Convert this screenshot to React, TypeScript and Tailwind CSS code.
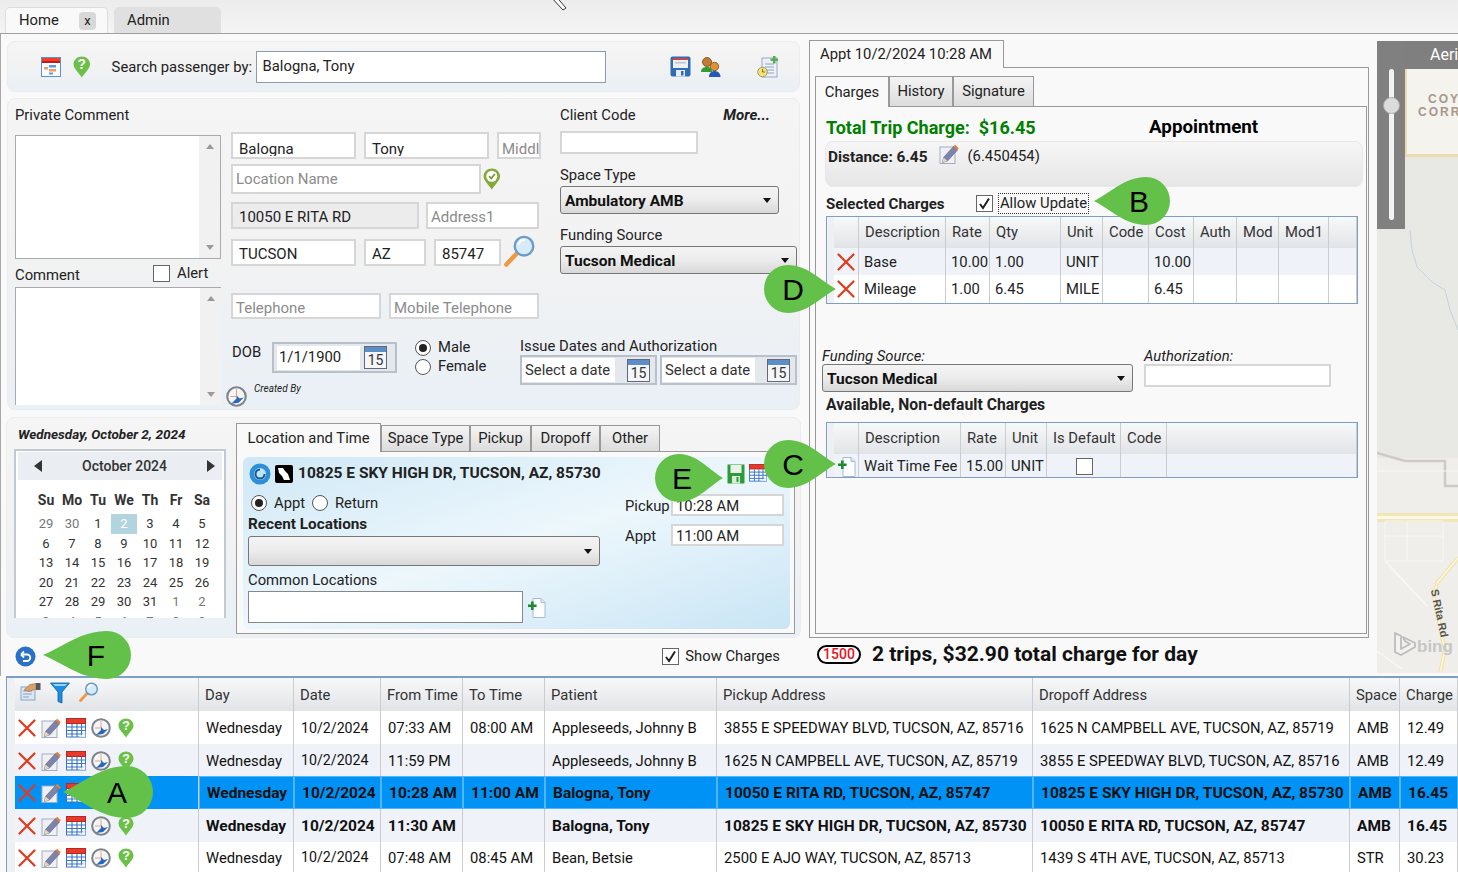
import type { ReactNode } from "react"

const ui = "font-['Roboto',sans-serif]"

function XIcon() {
  return (
    <svg width="18" height="18" viewBox="0 0 18 18" className="shrink-0">
      <path d="M1.500 1.500 16.500 16.500M16.500 1.500 1.500 16.500" stroke="#e23a1e" strokeWidth="2.200" strokeLinecap="round" />
    </svg>
  )
}

function PencilIcon({ size = 20 }: { size?: number }) {
  return (
    <svg width={size} height={size} viewBox="0 0 20 20" className="shrink-0">
      <rect x="1" y="3" width="15" height="16.500" fill="#eef0f6" stroke="#a3abbf" />
      <path d="M4.500 13.500 14.500 2.500 18.500 6 8.500 17 3.500 18.500Z" fill="#7e84a8" stroke="#565d84" strokeWidth=".6" />
      <path d="M14.500 2.500 16.200 .8 19.800 4.200 18.500 6Z" fill="#f07d2b" />
      <path d="M4.500 13.500 3.500 18.500 8.500 17Z" fill="#e9d7b4" />
    </svg>
  )
}

function TableIcon({ size = 20 }: { size?: number }) {
  return (
    <svg width={size} height={size} viewBox="0 0 20 20" className="shrink-0">
      <rect x=".5" y="5" width="19" height="14" fill="#fff" stroke="#3a76c4" />
      <rect x=".5" y=".5" width="19" height="5" fill="#e8392c" stroke="#b52a20" />
      <path d="M1 9h18M1 12.500h18M1 16h18M6 6v13M11 6v13M15.500 6v13" stroke="#3a76c4" strokeWidth="1.100" />
      <path d="M13 19 19.500 13V19Z" fill="#fff" opacity=".7" />
    </svg>
  )
}

function PlanIcon() {
  return (
    <svg width="20" height="20" viewBox="0 0 20 20" className="shrink-0">
      <rect x=".5" y=".5" width="19" height="19" fill="#f8fbff" stroke="#5c8fd6" />
      <rect x="1" y="1" width="18" height="3" fill="#f0402c" />
      <rect x="1" y="4" width="18" height="2" fill="#b5201c" />
      <rect x="8" y="8" width="7" height="2.500" fill="#5d9be0" />
      <rect x="3" y="10" width="4" height="2.500" fill="#f39a62" />
      <rect x="8" y="12" width="7" height="2.500" fill="#f39a62" />
      <rect x="8" y="15.500" width="4" height="2" fill="#5d9be0" />
    </svg>
  )
}

function ClockIcon({ size = 20 }: { size?: number }) {
  return (
    <svg width={size} height={size} viewBox="0 0 20 20" className="shrink-0">
      <circle cx="10" cy="10" r="8.800" fill="#f4f5f7" stroke="#7f8288" strokeWidth="2" />
      <path d="M10 3v7M4 10h6" stroke="#e7a28f" strokeWidth="1" />
      <path d="M5 17 10 12 10 9 13 12 17 11 12 16Z" fill="#2a66c0" />
    </svg>
  )
}

function Pin({ check = false, size = 20 }: { check?: boolean; size?: number }) {
  return (
    <svg width={size * 0.8} height={size} viewBox="0 0 16 20" className="shrink-0">
      <path d="M8 .5C3.800 .5 .5 3.600 .5 7.600c0 3.600 3.600 6.600 7.500 11.900C11.900 14.200 15.500 11.200 15.500 7.600 15.500 3.600 12.200 .5 8 .5Z" fill={check ? "#85a83a" : "#6cc04a"} />
      {check ? (
        <>
          <circle cx="8" cy="7.500" r="5" fill="#fff" />
          <path d="M5.500 7.500 7.500 9.500 10.800 5.500" fill="none" stroke="#6d9a2c" strokeWidth="1.600" />
        </>
      ) : (
        <text x="8" y="11.800" textAnchor="middle" fontSize="12.500" fontWeight="700" fill="#fff" fontFamily="Liberation Sans, sans-serif">?</text>
      )}
    </svg>
  )
}

function MagIcon({ size = 20 }: { size?: number }) {
  return (
    <svg width={size} height={size} viewBox="0 0 20 20" className="shrink-0">
      <path d="M1.500 18.500 8 11.500" stroke="#ec9a45" strokeWidth="2.800" strokeLinecap="round" />
      <circle cx="12.500" cy="7" r="5.800" fill="#d7ecfb" stroke="#6c9cc6" strokeWidth="1.500" />
      <path d="M9 6c.5-2 2-3 4-3" stroke="#fff" strokeWidth="1.300" fill="none" />
    </svg>
  )
}

function FunnelIcon() {
  return (
    <svg width="20" height="22" viewBox="0 0 20 22">
      <path d="M.5 1h19L12 10v11l-4-1.500V10Z" fill="#1a8fe0" stroke="#0c5da5" strokeWidth=".8" />
      <path d="M3 2h14l-2 2H5Z" fill="#9bd3f7" />
    </svg>
  )
}

function HandIcon() {
  return (
    <svg width="21" height="19" viewBox="0 0 21 19">
      <rect x="1" y="5" width="14" height="13" fill="#dce7f5" stroke="#8aa4c8" />
      <path d="M3 9h9M3 12h9M3 15h6" stroke="#8aa4c8" />
      <path d="M4 8 10 2.500 16 1.500V7L9 9.500Z" fill="#d9a06a" stroke="#9a6b3e" strokeWidth=".6" />
      <rect x="16" y="1" width="4.500" height="7" fill="#55585e" />
    </svg>
  )
}

function FloppyIcon() {
  return (
    <svg width="21" height="21" viewBox="0 0 21 21" className="shrink-0">
      <rect x=".5" y=".5" width="20" height="20" rx="2" fill="#2f6db5" />
      <rect x="3" y="2" width="15" height="10" fill="#f0f0f2" />
      <rect x="3" y="2" width="15" height="2" fill="#c9474a" />
      <rect x="5" y="6" width="11" height="1.500" fill="#b9c6d8" />
      <rect x="6" y="14" width="9" height="6.500" fill="#e9edf3" />
      <rect x="11" y="15" width="2.500" height="4.500" fill="#2f6db5" />
    </svg>
  )
}

function PeopleIcon() {
  return (
    <svg width="22" height="22" viewBox="0 0 22 22" className="shrink-0">
      <circle cx="7" cy="6" r="4.500" fill="#c47a33" stroke="#6f4a1d" strokeWidth=".8" />
      <path d="M1 16c0-4 3-5 6-5s5 1 5 5Z" fill="#2f9d33" />
      <circle cx="14.500" cy="10.500" r="4.200" fill="#e09138" stroke="#7a4d1c" strokeWidth=".8" />
      <path d="M9 21c0-4 2.500-6 5.500-6s6 2 6 6Z" fill="#2559b8" />
    </svg>
  )
}

function DocClockIcon() {
  return (
    <svg width="21" height="22" viewBox="0 0 21 22" className="shrink-0">
      <rect x="5" y="2" width="15" height="19" fill="#eef2f8" stroke="#96a8c4" />
      <path d="M8 8h9M8 11h9M10 14h7M10 17h7" stroke="#8ea3c2" />
      <path d="M16 0h2.500v2.500H21V5h-2.500v2.500H16V5h-2.500V2.500H16Z" fill="#57ad57" />
      <circle cx="5.500" cy="16" r="4.800" fill="#f3e27a" stroke="#9a9a6a" />
      <path d="M5.500 13v3h2.500" stroke="#8a6d1a" fill="none" />
    </svg>
  )
}

function SaveGreenIcon() {
  return (
    <svg width="18" height="20" viewBox="0 0 18 20" className="shrink-0">
      <rect x=".5" y=".5" width="17" height="19" fill="#2f9a3c" />
      <rect x="3.500" y="1" width="11" height="8" fill="#e8f4e8" />
      <rect x="5" y="12" width="8" height="7.500" fill="#d8ecd8" />
      <rect x="9.500" y="13" width="2" height="5" fill="#2f9a3c" />
    </svg>
  )
}

function AddDocIcon() {
  return (
    <svg width="19" height="21" viewBox="0 0 19 21" className="shrink-0">
      <path d="M6 1.500h8l4 4v15H6Z" fill="#fdfeff" stroke="#a9bad4" />
      <path d="M14 1.500v4h4" fill="#dbe5f3" stroke="#a9bad4" />
      <path d="M4 4.500h2.600v3h3v2.600h-3v3H4v-3H1V7.500h3Z" fill="#1f8a2f" />
    </svg>
  )
}

function Radio({ on = false }: { on?: boolean }) {
  return (
    <span className="flex h-[16px] w-[16px] shrink-0 items-center justify-center rounded-full border border-[#555] bg-white">
      {on && <span className="h-[8px] w-[8px] rounded-full bg-[#222]" />}
    </span>
  )
}

function Check({ on = false }: { on?: boolean }) {
  return (
    <span className="flex h-[17px] w-[17px] shrink-0 items-center justify-center border border-[#666] bg-white">
      {on && (
        <svg width="13" height="13" viewBox="0 0 13 13">
          <path d="M2 7 5 11 11 1.500" fill="none" stroke="#222" strokeWidth="2" />
        </svg>
      )}
    </span>
  )
}

function Field({ className, text, hint, gray, clip }: { className: string; text?: string; hint?: boolean; gray?: boolean; clip?: boolean }) {
  return (
    <div
      className={`flex shrink-0 overflow-hidden border-2 border-[#d6d6d6] text-[15px] leading-[22px] ${gray ? "bg-[#ececec]" : "bg-white"} ${hint ? "pl-[3px] text-[#8b8b8b]" : "pl-[6px] text-[#222]"} ${className}`}
    >
      <span className={`whitespace-nowrap ${clip ? "h-[18px] overflow-hidden" : ""}`}>{text}</span>
    </div>
  )
}

function Dropdown({ className, text }: { className: string; text?: string }) {
  return (
    <div className={`flex shrink-0 items-center justify-between rounded-[3px] border border-[#777] bg-gradient-to-b from-[#f4f4f4] via-[#ececec] to-[#d8d8d8] pl-[4px] pr-[7px] text-[15.500px] font-bold text-[#111] ${className}`}>
      <span className="pt-[3px]">{text}</span>
      <span className="h-0 w-0 border-x-[4px] border-t-[5px] border-x-transparent border-t-[#111]" />
    </div>
  )
}

function Cal15() {
  return (
    <span className="flex h-[23px] w-[23px] shrink-0 flex-col border border-[#667] bg-[#f4f6f9]">
      <span className="h-[6px] bg-[#5a8fc8]" />
      <span className="flex-1 text-center text-[14px] leading-[16px] text-[#333]">15</span>
    </span>
  )
}

function DateBox({ text, className }: { text: string; className: string }) {
  return (
    <div className={`flex items-center justify-between border-2 border-[#b8c0cc] bg-[#e4e7ec] pr-[5px] ${className}`}>
      <span className="flex h-[24px] w-[93px] items-center whitespace-nowrap bg-white pl-[3px] text-[#333]">{text}</span>
      <Cal15 />
    </div>
  )
}

function Scrollbar() {
  return (
    <div className="flex h-full w-[21px] flex-col items-center justify-between bg-[#f1f1f1] py-[8px]">
      <span className="h-0 w-0 border-x-[4px] border-b-[5px] border-x-transparent border-b-[#9a9a9a]" />
      <span className="h-0 w-0 border-x-[4px] border-t-[5px] border-x-transparent border-t-[#9a9a9a]" />
    </div>
  )
}

function Callout({ w, h, flip, letter, className, letterClass }: { w: number; h: number; flip?: boolean; letter: string; className: string; letterClass: string }) {
  const r = h / 2
  const c = w - r
  const d = `M0 ${r}C${c * 0.35} ${r * 0.6} ${c * 0.6} 0 ${c} 0A${r} ${r} 0 0 1 ${c} ${h}C${c * 0.6} ${h} ${c * 0.35} ${r * 1.4} 0 ${r}Z`
  return (
    <div className={`absolute z-20 ${className}`}>
      <svg width={w} height={h} viewBox={`0 0 ${w} ${h}`} className={flip ? "-scale-x-100" : ""}>
        <path d={d} fill="#63c14a" />
      </svg>
      <span className={`absolute inset-0 flex items-center justify-center font-['Liberation_Sans',sans-serif] text-[30px] text-black ${letterClass}`}>{letter}</span>
    </div>
  )
}

function Panel({ className, children }: { className: string; children: ReactNode }) {
  return (
    <div className={`rounded-[8px] border border-[#ececec] bg-gradient-to-b from-[#f5f5f5] via-[#f2f2f2] to-[#e9f0f6] ${className}`}>{children}</div>
  )
}

function Tab({ text, on, className }: { text: string; on?: boolean; className: string }) {
  return (
    <div
      className={`flex items-center justify-center whitespace-nowrap border border-b-0 border-[#999] text-[#222] ${on ? "relative z-10 -mb-px bg-[#f9f9f9]" : "bg-gradient-to-b from-[#f4f4f4] to-[#dcdcdc]"} ${className}`}
    >
      {text}
    </div>
  )
}

const calendarRows = [
  ["29", "30", "1", "2", "3", "4", "5"],
  ["6", "7", "8", "9", "10", "11", "12"],
  ["13", "14", "15", "16", "17", "18", "19"],
  ["20", "21", "22", "23", "24", "25", "26"],
  ["27", "28", "29", "30", "31", "1", "2"],
  ["3", "4", "5", "6", "7", "8", "9"],
]

function Calendar() {
  return (
    <div className="h-[169px] w-[212px] overflow-hidden border-x-2 border-t-2 border-[#c4c9d0] bg-white">
      <div className="mx-[2px] mt-[1px] flex h-[28px] items-center justify-between bg-[#eaedf1] pl-[16px] pr-[7px] text-[14px] font-medium text-[#333]">
        <span className="h-0 w-0 border-y-[6px] border-r-[8px] border-y-transparent border-r-[#333]" />
        <span>October 2024</span>
        <span className="h-0 w-0 border-y-[6px] border-l-[8px] border-y-transparent border-l-[#333]" />
      </div>
      <div className="ml-[17px] mt-[10px] grid w-[182px] grid-cols-7 text-center">
        {["Su", "Mo", "Tu", "We", "Th", "Fr", "Sa"].map((d) => (
          <span key={d} className="h-[24px] text-[14px] font-bold leading-[20px] text-[#333]">{d}</span>
        ))}
        {calendarRows.flat().map((d, i) => {
          const faded = i < 2 || i > 32
          return (
            <span key={i} className={`h-[19.6px] text-[13px] leading-[19px] ${i === 3 ? "bg-[#b2d4df] text-white" : faded ? "text-[#777]" : "text-[#333]"}`}>
              {d}
            </span>
          )
        })}
      </div>
    </div>
  )
}

function ChargeHeader({ cols, labels }: { cols: string; labels: string[] }) {
  return (
    <div className={`grid h-[31px] bg-gradient-to-b from-[#f7f8f9] to-[#e1e4e7] ${cols}`}>
      <span className="border-r border-[#ccc]" />
      {labels.map((l) => (
        <span key={l} className="flex items-center whitespace-nowrap border-r border-[#ccc] pl-[6px] text-[#333]">{l}</span>
      ))}
    </div>
  )
}

function ChargeRow({ cols, cells, alt, icon, h }: { cols: string; cells: ReactNode[]; alt?: boolean; icon: ReactNode; h: string }) {
  return (
    <div className={`grid ${h} ${alt ? "bg-[#eff3f9]" : "bg-white"} ${cols}`}>
      <span className="flex items-center border-r border-[#ccc] pl-[3px]">{icon}</span>
      {cells.map((c, i) => (
        <span key={i} className="flex items-center whitespace-nowrap border-r border-[#ccc] pl-[5px] pt-[1px] text-[#222]">{c}</span>
      ))}
    </div>
  )
}

const tripRows = [
  { day: "Wednesday", date: "10/2/2024", from: "07:33 AM", to: "08:00 AM", patient: "Appleseeds, Johnny B", pickup: "3855 E SPEEDWAY BLVD, TUCSON, AZ, 85716", dropoff: "1625 N CAMPBELL AVE, TUCSON, AZ, 85719", space: "AMB", charge: "12.49", bg: "bg-white", h: "h-[33px]" },
  { day: "Wednesday", date: "10/2/2024", from: "11:59 PM", to: "", patient: "Appleseeds, Johnny B", pickup: "1625 N CAMPBELL AVE, TUCSON, AZ, 85719", dropoff: "3855 E SPEEDWAY BLVD, TUCSON, AZ, 85716", space: "AMB", charge: "12.49", bg: "bg-[#eff3f9]", h: "h-[32px]" },
  { day: "Wednesday", date: "10/2/2024", from: "10:28 AM", to: "11:00 AM", patient: "Balogna, Tony", pickup: "10050 E RITA RD, TUCSON, AZ, 85747", dropoff: "10825 E SKY HIGH DR, TUCSON, AZ, 85730", space: "AMB", charge: "16.45", bg: "bg-[#0093f5]", h: "h-[33px]", bold: true, selected: true },
  { day: "Wednesday", date: "10/2/2024", from: "11:30 AM", to: "", patient: "Balogna, Tony", pickup: "10825 E SKY HIGH DR, TUCSON, AZ, 85730", dropoff: "10050 E RITA RD, TUCSON, AZ, 85747", space: "AMB", charge: "16.45", bg: "bg-[#eff3f9]", h: "h-[33px]", bold: true },
  { day: "Wednesday", date: "10/2/2024", from: "07:48 AM", to: "08:45 AM", patient: "Bean, Betsie", pickup: "2500 E AJO WAY, TUCSON, AZ, 85713", dropoff: "1439 S 4TH AVE, TUCSON, AZ, 85713", space: "STR", charge: "30.23", bg: "bg-white", h: "h-[30px]" },
]

const tripCols = "grid-cols-[184px_95px_87px_82px_82px_172px_316px_317px_50px_58px]"

function TripGrid() {
  return (
    <div className="ml-[6px] h-[196px] overflow-hidden border-t-2 border-l border-[#7d9fc6]">
      <div className="flex">
        <div className="w-[8px] shrink-0 bg-[#eef0f2]" />
        <div className="flex-1">
          <div className={`grid h-[33px] bg-gradient-to-b from-[#f7f8f9] to-[#e1e4e7] ${tripCols}`}>
            <div className="flex items-start gap-[9px] border-r border-[#ccc] pl-[5px] pt-[4px]">
              <HandIcon />
              <FunnelIcon />
              <MagIcon />
            </div>
            {["Day", "Date", "From Time", "To Time", "Patient", "Pickup Address", "Dropoff Address", "Space", "Charge"].map((h) => (
              <span key={h} className="flex items-center whitespace-nowrap border-r border-[#ccc] pl-[6px] pt-[1px] text-[#333]">{h}</span>
            ))}
          </div>
          {tripRows.map((r, i) => (
            <div key={i} className={`grid ${r.h} ${r.bg} ${tripCols}`}>
              <div className="flex items-center gap-[5px] border-r border-[#ccc] pl-[3px] pt-[1px]">
                <XIcon />
                <PencilIcon />
                <TableIcon />
                <ClockIcon />
                <span className="ml-[2px]"><Pin /></span>
              </div>
              {[r.day, r.date, r.from, r.to, r.patient, r.pickup, r.dropoff, r.space, r.charge].map((c, j) => (
                <span
                  key={j}
                  className={`flex items-center whitespace-nowrap pl-[7px] pt-[2px] text-[#111] ${r.selected ? "border border-[#55b4f8]" : "border-r border-[#ccc]"} ${r.bold ? "text-[15.500px] font-bold" : j === 1 ? "text-[14.200px]" : ""}`}
                >
                  {c}
                </span>
              ))}
            </div>
          ))}
        </div>
      </div>
    </div>
  )
}

function MapPane() {
  return (
    <div className="relative mt-[7px] h-[632px] w-[81px] overflow-hidden bg-[#e8e8e5]">
      <svg width="81" height="632" viewBox="0 0 81 632" className="absolute left-0 top-0">
        <rect x="0" y="417" width="81" height="215" fill="#efeeeb" />
        <path d="M33 189 35 209 40 226 55 241 68 249 73 269 81 289" fill="none" stroke="#c7d2dd" strokeWidth="1" />
        <path d="M0 412 28 420H68V445H81" fill="none" stroke="#cecbc7" strokeWidth="2.500" />
        <path d="M0 430H81" stroke="#f7f7f5" strokeWidth="1" />
        <rect x="0" y="472" width="81" height="9" fill="#f1e6b6" />
        <rect x="0" y="475" width="81" height="3" fill="#fbf8ea" />
        <path d="M8 480H66V520H8ZM8 495H66M30 480V520" fill="none" stroke="#f7f7f4" strokeWidth="1" />
        <path d="M81 517 60 542 57 556 68 609 63 632" fill="none" stroke="#f1e4ac" strokeWidth="4" />
        <path d="M81 517 60 542 57 556 68 609 63 632" fill="none" stroke="#faf6e2" strokeWidth="1.500" />
        <path d="M8 520 50 565M0 610 25 628" stroke="#f8f8f6" strokeWidth="1.500" />
        <path d="M18 592 24 595V608L33 603 28 600 26 596 38 602V606L24 614 18 611Z" fill="#f2f2f0" stroke="#bcbcbc" strokeWidth="1.800" strokeLinejoin="round" />
      </svg>
      <div className="absolute left-[28px] top-[28px] h-[88px] w-[53px] overflow-hidden border-b-[3px] border-l-[2px] border-[#eadcae] bg-[#f4f3ee]">
        <div className="ml-[21px] mt-[24px] whitespace-nowrap font-['Liberation_Sans',sans-serif] text-[12px] font-bold leading-[13px] tracking-[2px] text-[#a8988c]">COYOTE</div>
        <div className="ml-[11px] whitespace-nowrap font-['Liberation_Sans',sans-serif] text-[12px] font-bold leading-[13px] tracking-[2px] text-[#a8988c]">CORRIDOR</div>
      </div>
      <div className="absolute left-0 top-0 h-[28px] w-[81px] overflow-hidden bg-[#7f7f7f] pl-[53px] text-[16px] leading-[28px] text-white">
        <span className="whitespace-nowrap">Aerial</span>
      </div>
      <div className="absolute left-0 top-0 flex h-[188px] w-[28px] justify-center bg-[#808080]">
        <div className="relative mt-[28px] h-[151px] w-[5px] rounded-full bg-[#f3f3f3]">
          <div className="absolute -left-[6px] top-[28px] h-[17px] w-[17px] rounded-full border border-[#aaa] bg-[#dcdcdc]" />
        </div>
      </div>
      <span className="absolute left-[38px] top-[564px] rotate-[78deg] whitespace-nowrap font-['Liberation_Sans',sans-serif] text-[11px] font-bold text-[#555]">S Rita Rd</span>
      <span className="absolute left-[40px] top-[593px] font-['Liberation_Sans',sans-serif] text-[17px] font-bold text-[#c6c6c6]">bing</span>
    </div>
  )
}

export default function App() {
  const chargeCols = "grid-cols-[25px_87px_44px_71px_42px_46px_45px_43px_42px_50px_1fr]"
  const availCols = "grid-cols-[25px_102px_45px_41px_74px_46px_1fr]"
  return (
    <div className={`relative h-[872px] w-[1458px] overflow-hidden bg-[#f9f9f9] text-[14.800px] text-[#222] ${ui}`}>
      {/* top tabs */}
      <div className="h-[34px] border-b border-[#a0a0a0] bg-gradient-to-b from-[#ececec] to-[#f4f4f4] pt-[7px]">
        <div className="flex gap-[6px] pl-[5px]">
          <div className="flex h-[26px] w-[103px] items-center rounded-t-[5px] border border-b-0 border-[#ddd] bg-[#f9f9f9] pl-[13px]">
            <span className="w-[60px]">Home</span>
            <span className="flex h-[18px] w-[17px] items-center justify-center rounded-[4px] bg-[#d8d8d8] text-[13px]">x</span>
          </div>
          <div className="flex h-[26px] w-[107px] items-center rounded-t-[5px] bg-[#e0e0e0] pl-[13px]">Admin</div>
        </div>
      </div>

      <div className="flex h-[642px]">
        {/* left column */}
        <div className="w-[808px] shrink-0 border-l border-[#a8a8a8]">
          <Panel className="ml-[6px] mt-[7px] flex h-[51px] w-[793px] items-center">
            <span className="ml-[33px]"><PlanIcon /></span>
            <span className="ml-[12px]"><Pin size={22} /></span>
            <span className="ml-[21px] mt-[1px] w-[140px] whitespace-nowrap">Search passenger by:</span>
            <div className="ml-[4px] flex h-[32px] w-[350px] items-start border border-[#8a9ab0] bg-white pl-[6px] pt-[3px]">Balogna, Tony</div>
            <span className="ml-[64px]"><FloppyIcon /></span>
            <span className="ml-[9px]"><PeopleIcon /></span>
            <span className="ml-[35px]"><DocClockIcon /></span>
          </Panel>

          <Panel className="ml-[6px] mt-[6px] flex h-[312px] w-[793px] pl-[7px]">
            <div className="w-[206px] shrink-0 pt-[6px]">
              <div className="h-[20px] leading-[20px]">Private Comment</div>
              <div className="mt-[10px] flex h-[124px] justify-end border border-[#aaa] bg-white"><Scrollbar /></div>
              <div className="flex h-[28px] items-center">
                <span className="mt-[4px] w-[138px]">Comment</span>
                <Check />
                <span className="ml-[7px] mt-[1px]">Alert</span>
              </div>
              <div className="flex h-[118px] justify-end border-l border-t border-[#aaa] bg-white"><Scrollbar /></div>
            </div>

            <div className="ml-[10px] flex-1">
              <div className="flex">
                <div className="w-[309px] shrink-0 pt-[33px]">
                  <div className="flex h-[27px] gap-[8px]">
                    <Field clip className="h-[27px] w-[125px] pt-[4px]" text="Balogna" />
                    <Field clip className="h-[27px] w-[125px] pt-[4px]" text="Tony" />
                    <Field clip className="h-[27px] w-[44px] pt-[4px]" text="Middle" hint />
                  </div>
                  <div className="mt-[5px] flex h-[30px] items-center gap-[2px]">
                    <Field className="h-[30px] w-[250px] items-center" text="Location Name" hint />
                    <Pin check size={22} />
                  </div>
                  <div className="mt-[8px] flex gap-[7px]">
                    <Field className="h-[27px] w-[188px] pt-[2px]" text="10050 E RITA RD" gray />
                    <Field className="h-[27px] w-[113px] pt-[2px]" text="Address1" hint />
                  </div>
                  <div className="mt-[10px] flex gap-[8px]">
                    <Field className="h-[27px] w-[125px] pt-[2px]" text="TUCSON" />
                    <Field className="h-[27px] w-[62px] pt-[2px]" text="AZ" />
                    <Field className="h-[27px] w-[67px] pt-[2px]" text="85747" />
                    <span className="-ml-[5px] -mt-[4px]"><MagIcon size={32} /></span>
                  </div>
                  <div className="mt-[26px] flex gap-[8px]">
                    <Field className="h-[26px] w-[150px] pt-[2px]" text="Telephone" hint />
                    <Field className="h-[26px] w-[150px] pt-[2px]" text="Mobile Telephone" hint />
                  </div>
                </div>
                <div className="ml-[20px] w-[238px] shrink-0 pt-[6px]">
                  <div className="flex h-[20px] items-center justify-between pr-[28px]">
                    <span>Client Code</span>
                    <span className="text-[15px] font-bold italic">More...</span>
                  </div>
                  <div className="mt-[6px] h-[23px] w-[138px] border-2 border-[#d6d6d6] bg-white" />
                  <div className="mt-[12px] h-[20px] leading-[18px]">Space Type</div>
                  <Dropdown className="h-[28px] w-[219px]" text="Ambulatory AMB" />
                  <div className="mt-[12px] h-[20px] leading-[18px]">Funding Source</div>
                  <Dropdown className="h-[28px] w-[237px]" text="Tucson Medical" />
                </div>
              </div>

              <div className="mt-[20px] flex h-[46px]">
                <span className="mt-[2px] w-[41px] shrink-0 pl-[1px]">DOB</span>
                <div className="mt-[3px] flex h-[31px] w-[125px] items-center justify-between border-2 border-[#b8c0cc] bg-[#e4e7ec] pl-[3px] pr-[8px]">
                  <span className="flex h-[24px] w-[83px] items-center bg-white pl-[2px]">1/1/1900</span>
                  <Cal15 />
                </div>
                <div className="ml-[18px] -mt-[1px] w-[105px] shrink-0">
                  <div className="flex h-[19px] items-center gap-[7px]"><Radio on />Male</div>
                  <div className="flex h-[19px] items-center gap-[7px]"><Radio />Female</div>
                </div>
                <div>
                  <div className="-mt-px h-[17px] whitespace-nowrap leading-[16px]">Issue Dates and Authorization</div>
                  <div className="flex gap-[3px]">
                    <DateBox className="h-[30px] w-[137px]" text="Select a date" />
                    <DateBox className="h-[30px] w-[137px]" text="Select a date" />
                  </div>
                </div>
              </div>
              <div className="-ml-[5px] mt-[1px] flex items-start gap-[7px]">
                <ClockIcon size={21} />
                <span className="-mt-[3px] text-[10px] italic leading-[12px]">Created By</span>
              </div>
            </div>
          </Panel>

          <Panel className="ml-[5px] mt-[7px] flex h-[221px] w-[795px] pl-[7px]">
            <div className="w-[212px] shrink-0">
              <div className="mt-[6px] h-[25px] pl-[4px] text-[13.500px] font-bold italic leading-[20px]">Wednesday, October 2, 2024</div>
              <Calendar />
            </div>
            <div className="ml-[10px] mt-[5px] w-[559px]">
              <div className="flex items-end">
                <Tab on text="Location and Time" className="h-[29px] w-[145px]" />
                <Tab text="Space Type" className="h-[26px] w-[89px]" />
                <Tab text="Pickup" className="h-[26px] w-[61px]" />
                <Tab text="Dropoff" className="h-[26px] w-[69px]" />
                <Tab text="Other" className="h-[26px] w-[60px]" />
              </div>
              <div className="h-[183px] border border-[#999] bg-[#f9f9f9] pl-[6px] pt-[5px]">
                <div className="flex h-[172px] w-[547px] rounded-[6px] bg-gradient-to-br from-[#cfe8f6] via-[#edf7fc] to-[#c9e5f5] pl-[5px]">
                  <div className="w-[352px] shrink-0">
                    <div className="mt-[7px] flex h-[20px] items-center">
                      <svg width="22" height="22" viewBox="0 0 22 22" className="ml-[1px] shrink-0">
                        <circle cx="11" cy="11" r="10.500" fill="#2c8fd8" />
                        <circle cx="11" cy="11" r="6" fill="#bfe3f7" />
                        <path d="M11 6.500a4.500 4.500 0 1 0 4.500 4.500" fill="none" stroke="#14578c" strokeWidth="2" />
                      </svg>
                      <span className="ml-[4px] flex h-[18px] w-[18px] shrink-0 items-center justify-center rounded-[2px] bg-black">
                        <svg width="14" height="14" viewBox="0 0 14 14">
                          <path d="M1 1h5l2 3 3 3 2 6H7L5 9 2 6Z" fill="#fff" />
                        </svg>
                      </span>
                      <span className="ml-[5px] whitespace-nowrap text-[15.500px] font-bold">10825 E SKY HIGH DR, TUCSON, AZ, 85730</span>
                    </div>
                    <div className="mt-[10px] flex h-[18px] items-center">
                      <span className="ml-[3px]"><Radio on /></span>
                      <span className="ml-[7px] w-[38px]">Appt</span>
                      <Radio />
                      <span className="ml-[7px]">Return</span>
                    </div>
                    <div className="mt-[2px] h-[20px] text-[15.300px] font-bold leading-[20px]">Recent Locations</div>
                    <Dropdown className="mt-[2px] h-[30px] w-[352px]" />
                    <div className="mt-[4px] h-[20px] leading-[20px]">Common Locations</div>
                    <div className="mt-[1px] flex items-center gap-[4px]">
                      <div className="h-[32px] w-[275px] border border-[#888] bg-white" />
                      <AddDocIcon />
                    </div>
                  </div>
                  <div className="ml-[25px] w-[159px] shrink-0 pt-[7px]">
                    <div className="ml-[102px] flex h-[20px] gap-[4px]">
                      <SaveGreenIcon />
                      <TableIcon size={18} />
                    </div>
                    <div className="mt-[9px] flex items-center">
                      <span className="w-[46px] pt-[2px]">Pickup</span>
                      <span className="flex h-[22px] w-[113px] items-center border-2 border-[#d6d6d6] bg-white pl-[3px] pt-[1px]">10:28 AM</span>
                    </div>
                    <div className="mt-[6px] flex items-center">
                      <span className="w-[46px] pt-[2px]">Appt</span>
                      <span className="flex h-[22px] w-[113px] items-center border-2 border-[#d6d6d6] bg-white pl-[3px] pt-[1px]">11:00 AM</span>
                    </div>
                  </div>
                </div>
              </div>
            </div>
          </Panel>

          <div className="flex h-[37px] items-center pl-[14px] pr-[28px]">
            <svg width="21" height="21" viewBox="0 0 21 21">
              <circle cx="10.500" cy="10.500" r="10" fill="#2a6fc9" />
              <path d="M6 8.500h6a3.200 3.200 0 0 1 0 6.500H8M6 8.500l3-3M6 8.500l3 3" fill="none" stroke="#fff" strokeWidth="1.800" />
            </svg>
            <span className="ml-auto"><Check on /></span>
            <span className="ml-[6px]">Show Charges</span>
          </div>
        </div>

        {/* right column */}
        <div className="w-[569px] shrink-0 pt-[6px]">
          <div className="relative z-10 -mb-px ml-[1px] flex h-[28px] w-[195px] items-center whitespace-nowrap border border-b-0 border-[#999] bg-[#f9f9f9] pl-[10px]">
            Appt 10/2/2024 10:28 AM
          </div>
          <div className="ml-[1px] h-[571px] w-[560px] border border-[#999] bg-[#f9f9f9] pl-[5px] pt-[8px]">
            <div className="flex items-end">
              <Tab on text="Charges" className="h-[31px] w-[74px]" />
              <Tab text="History" className="h-[30px] w-[64px]" />
              <Tab text="Signature" className="h-[30px] w-[81px]" />
            </div>
            <div className="h-[528px] w-[552px] border border-[#999] bg-[#f9f9f9] pl-[10px]">
              <div className="mt-[10px] flex h-[20px] items-center">
                <span className="w-[323px] whitespace-nowrap text-[18px] font-bold text-[#008000]">Total Trip Charge:&nbsp; $16.45</span>
                <span className="text-[18.800px] font-bold text-black">Appointment</span>
              </div>
              <div className="-ml-px mt-[4px] flex h-[46px] w-[538px] items-start rounded-[8px] border border-[#e8e8e8] bg-gradient-to-b from-[#f6f6f6] to-[#e6e6e6] pl-[2px] pt-[4px]">
                <span className="text-[15.400px] font-bold">Distance: 6.45</span>
                <span className="ml-[11px] -mt-[2px]"><PencilIcon /></span>
                <span className="ml-[9px] -mt-[1px]">(6.450454)</span>
              </div>
              <div className="mt-[5px] flex h-[22px] items-center">
                <span className="mt-[2px] w-[150px] text-[15px] font-bold">Selected Charges</span>
                <Check on />
                <span className="ml-[5px] flex h-[21px] w-[91px] items-center justify-center whitespace-nowrap border border-dotted border-[#333]">Allow Update</span>
              </div>
              <div className="mt-[2px] flex h-[88px] w-[532px] overflow-hidden border border-[#7d9fc6]">
                <div className="w-[7px] bg-[#eef0f2]" />
                <div className="flex-1">
                  <ChargeHeader cols={chargeCols} labels={["Description", "Rate", "Qty", "Unit", "Code", "Cost", "Auth", "Mod", "Mod1", " "]} />
                  <ChargeRow cols={chargeCols} alt h="h-[27px]" icon={<XIcon />} cells={["Base", "10.00", "1.00", "UNIT", "", "10.00", "", "", "", ""]} />
                  <ChargeRow cols={chargeCols} h="h-[28px]" icon={<XIcon />} cells={["Mileage", "1.00", "6.45", "MILE", "", "6.45", "", "", "", ""]} />
                </div>
              </div>
              <div className="-ml-[4px] mt-[44px] h-[16px] italic leading-[16px]">
                <span className="inline-block w-[322px]">Funding Source:</span>Authorization:
              </div>
              <div className="-ml-[4px] flex items-start">
                <Dropdown className="h-[28px] w-[311px]" text="Tucson Medical" />
                <div className="ml-[11px] h-[23px] w-[187px] border-2 border-[#d6d6d6] bg-white" />
              </div>
              <div className="mt-[3px] h-[20px] text-[15.700px] font-bold leading-[20px]">Available, Non-default Charges</div>
              <div className="mt-[7px] flex h-[56px] w-[532px] overflow-hidden border border-[#7d9fc6]">
                <div className="w-[7px] bg-[#eef0f2]" />
                <div className="flex-1">
                  <ChargeHeader cols={availCols} labels={["Description", "Rate", "Unit", "Is Default", "Code", " "]} />
                  <ChargeRow
                    cols={availCols}
                    alt
                    h="h-[24px]"
                    icon={<AddDocIcon />}
                    cells={["Wait Time Fee", "15.00", "UNIT", <span key="c" className="ml-[24px]"><Check /></span>, "", ""]}
                  />
                </div>
              </div>
            </div>
          </div>
          <div className="flex h-[33px] items-center pl-[9px]">
            <span className="flex h-[19px] w-[44px] items-center justify-center rounded-[10px] border-2 border-black bg-white text-[14px] font-medium text-[#e8141c]">1500</span>
            <span className="ml-[11px] whitespace-nowrap text-[21px] font-bold text-[#111]">2 trips, $32.90 total charge for day</span>
          </div>
        </div>

        <MapPane />
      </div>

      <TripGrid />

      <Callout w={90} h={52} letter="A" className="left-[63px] top-[766px]" letterClass="pl-[18px]" />
      <Callout w={76} h={48} letter="B" className="left-[1094px] top-[177px]" letterClass="pl-[14px]" />
      <Callout w={72} h={48} flip letter="C" className="left-[764px] top-[440px]" letterClass="pr-[14px]" />
      <Callout w={72} h={48} flip letter="D" className="left-[764px] top-[265px]" letterClass="pr-[14px]" />
      <Callout w={68} h={48} flip letter="E" className="left-[655px] top-[454px]" letterClass="pr-[14px]" />
      <Callout w={88} h={48} letter="F" className="left-[43px] top-[631px]" letterClass="pl-[18px]" />

      {/* scroll-cursor sliver poking in from the top */}
      <svg width="20" height="14" viewBox="0 0 20 14" className="absolute left-[549px] top-0">
        <path d="M1 -4 14 10 17 8 5 -6Z" fill="#fff" stroke="#333" />
      </svg>
    </div>
  )
}
